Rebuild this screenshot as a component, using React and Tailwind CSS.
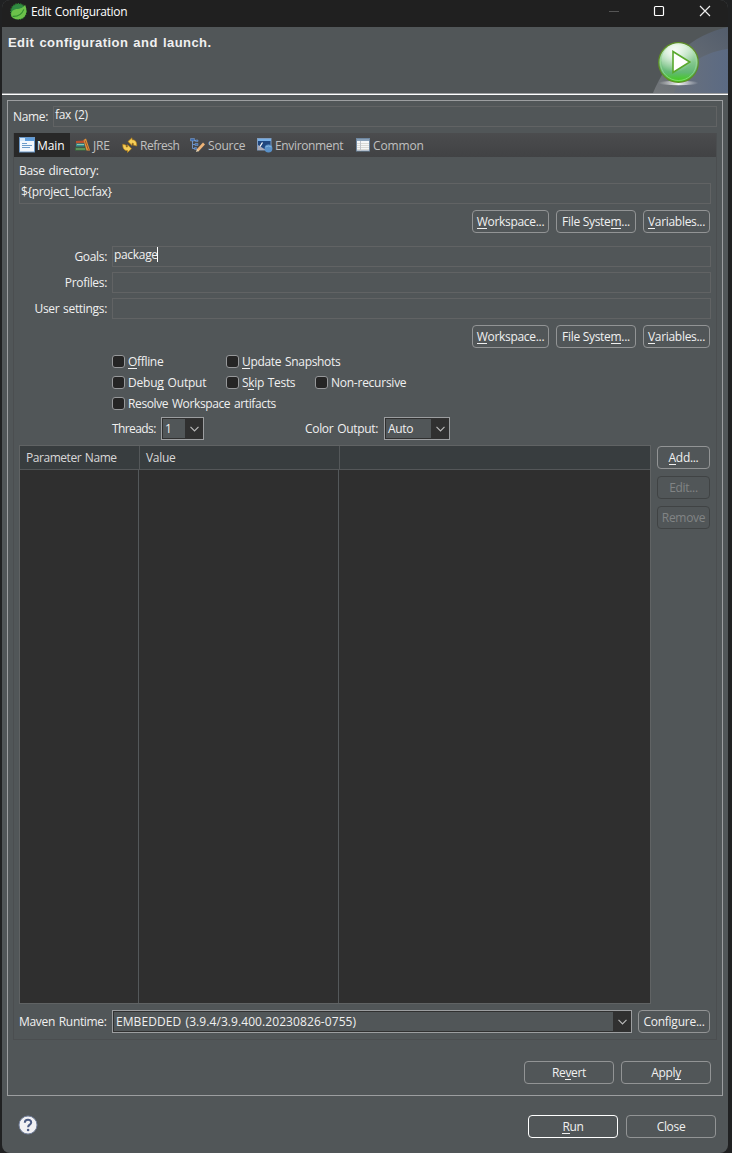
import { useState } from "react";

const SpringIcon = () => (
  <svg width="17" height="17" viewBox="0 0 16 16" className="shrink-0 relative -top-[2px]">
    <circle cx="8" cy="8" r="7.2" fill="#2f8a42" stroke="#2f7f31" strokeWidth="1.4" strokeDasharray="1.2 1" />
    <path d="M14.2 1.6C15.6 5 16 8.800 14.300 11.800C11.800 16 5.500 16.600 1.600 13.200C0 9.500 2 6.400 6 5.700C10 5.200 12.500 4.500 14.200 1.600Z" fill="#6cc04a" />
    <path d="M2.500 12.600C7 12.800 11.300 10.500 13 6" stroke="#2f8d2f" strokeWidth="1" fill="none" />
  </svg>
);

const Banner = () => (
  <svg width="75" height="66" viewBox="0 0 75 66">
    <defs>
      <linearGradient id="arc" x1="0" y1="1" x2="1" y2="0">
        <stop offset="0" stopColor="#73777a" />
        <stop offset="0.5" stopColor="#636a73" />
        <stop offset="1" stopColor="#535d6c" />
      </linearGradient>
      <linearGradient id="arcBlue" x1="0" y1="0" x2="1" y2="0">
        <stop offset="0" stopColor="#6a717c" />
        <stop offset="1" stopColor="#5b6a83" />
      </linearGradient>
      <linearGradient id="ball" x1="0" y1="0" x2="0" y2="1">
        <stop offset="0" stopColor="#d8f0d8" />
        <stop offset="0.5" stopColor="#83c78d" />
        <stop offset="0.75" stopColor="#62b774" />
        <stop offset="1" stopColor="#3fd00c" />
      </linearGradient>
      <radialGradient id="shine" cx="0.38" cy="0.25" r="0.6">
        <stop offset="0" stopColor="#fff" stopOpacity="0.95" />
        <stop offset="1" stopColor="#fff" stopOpacity="0" />
      </radialGradient>
      <linearGradient id="shadow" x1="0" y1="0" x2="1" y2="0">
        <stop offset="0" stopColor="#fff" stopOpacity="0" />
        <stop offset="0.5" stopColor="#fff" stopOpacity="0.9" />
        <stop offset="1" stopColor="#fff" stopOpacity="0" />
      </linearGradient>
    </defs>
    <path d="M0 66C14 32 38 8 75 0V66Z" fill="url(#arc)" />
    <path d="M21 66C30 40 46 26 75 22V66Z" fill="url(#arcBlue)" />
    <ellipse cx="25.500" cy="56" rx="20" ry="2.200" fill="url(#shadow)" />
    <circle cx="25.500" cy="35.500" r="19.800" fill="url(#ball)" stroke="#5f8f28" strokeWidth="1.200" />
    <circle cx="25.500" cy="35.500" r="18" fill="none" stroke="#a5e29c" strokeWidth="1" opacity="0.6" />
    <circle cx="25.500" cy="33.500" r="17" fill="url(#shine)" />
    <path d="M20 24.500V45.500L36.800 35Z" fill="#fff" stroke="#58a82c" strokeWidth="1.600" />
  </svg>
);

const MainIcon = () => (
  <svg width="16" height="16" viewBox="0 0 16 16">
    <rect x="0.500" y="0.500" width="15" height="14.500" fill="#f4f8fd" stroke="#6b98c8" />
    <rect x="1" y="1" width="14" height="3" fill="#5f9edc" />
    <rect x="1" y="1" width="5" height="3" fill="#d5e9fb" />
    <path d="M3 6.500H8M3 8.500H13M3 10.500H11" stroke="#6c9cca" />
  </svg>
);

const JreIcon = () => (
  <svg width="16" height="16" viewBox="0 0 16 16">
    <path d="M1 4L9 3.500V6L1 6.500Z" fill="#b9502f" />
    <path d="M1 6.500H9.500V9.500H1Z" fill="#34908f" />
    <path d="M2 7.500H9" stroke="#8fc8ae" />
    <path d="M0 10.500H11V13.500H0Z" fill="#3b6f42" />
    <path d="M1 12H10" stroke="#82b56c" />
    <path d="M8.500 3L11 1.500L15 13.500H11.500Z" fill="#e5933c" />
    <path d="M10 3.500L13.500 13" stroke="#9e5520" />
  </svg>
);

const RefreshIcon = () => (
  <svg width="16" height="16" viewBox="0 0 16 16" fill="#f6cf58" stroke="#b98317" strokeWidth="0.700">
    <path d="M6 4.500L10 0.800V2.800C13.500 2.500 15 5.500 14.700 9L11.200 8C11.800 6.500 11.500 6 10 6.300V8.500Z" />
    <path d="M9.500 11.700L5.500 15.500V13.500C2 13.800 0.500 11 0.800 7.200L4.300 8.200C3.800 9.700 4 10.400 5.500 10V7.800Z" />
  </svg>
);

const SourceIcon = () => (
  <svg width="16" height="16" viewBox="0 0 16 16" fill="none">
    <path d="M2.500 3V11.500H6M2.500 7.500H6M3 3.500H6" stroke="#6f93c6" />
    <path d="M0.500 1.500H4.500V4H0.500ZM5.500 3H8V4.500H5.500ZM5 6.500H8V8.500H5ZM4.500 10.500H6.500V12.500H4.500Z" fill="#3e6db0" stroke="#87a6d2" strokeWidth="0.500" />
    <path d="M7.500 13.500L14 6.500" stroke="#eeb477" strokeWidth="2.600" />
    <path d="M6 15L7 12L9 14Z" fill="#e9d5b4" />
  </svg>
);

const EnvironmentIcon = () => (
  <svg width="16" height="16" viewBox="0 0 16 16">
    <rect x="0.500" y="1.500" width="13.500" height="11.500" fill="#20477f" stroke="#7f9cc0" />
    <rect x="1" y="2" width="13" height="2" fill="#77afe5" />
    <path d="M1 13V8L9 13Z" fill="#a9a9b6" />
    <path d="M3 9.500L5.500 5.500" stroke="#fff" strokeWidth="1.300" />
    <circle cx="11.500" cy="11.500" r="3.900" fill="#5990c8" />
    <path d="M8.500 10Q11.500 8 14.500 10" stroke="#81b4df" fill="none" />
  </svg>
);

const CommonIcon = () => (
  <svg width="16" height="16" viewBox="0 0 16 16">
    <rect x="1.500" y="1.500" width="13" height="12.500" fill="#f5f6f7" stroke="#6f87a0" />
    <rect x="2" y="2" width="12" height="2" fill="#88a0b8" />
    <path d="M2 6.500H14M2 8.500H14M2 10.500H14M2 12.500H14" stroke="#d9d9d5" />
    <path d="M5.500 4V14" stroke="#c0c4c9" />
  </svg>
);

const Chevron = () => (
  <svg width="9" height="6" viewBox="0 0 9 6" fill="none" stroke="#b9b9b9" strokeWidth="1.200">
    <path d="M0.500 0.800L4.500 4.800L8.500 0.800" />
  </svg>
);

// the character after "&" is underlined as the mnemonic
const Mnemonic = ({ text }) => {
  const i = text.indexOf("&");
  if (i < 0) return text;
  return (
    <>
      {text.slice(0, i)}
      <span className="border-b border-[#f0f0f0] inline-block leading-[13px]">{text[i + 1]}</span>
      {text.slice(i + 2)}
    </>
  );
};

const Button = ({ text, className = "", tone = "border-[#929495] text-[#f0f0f0]" }) => (
  <button className={`h-[23px] shrink-0 rounded-[4px] border whitespace-nowrap flex items-center justify-center pt-px ${tone} ${className}`}>
    <span><Mnemonic text={text} /></span>
  </button>
);

const Field = ({ value = "", caret, className = "" }) => (
  <div className={`h-[21px] border border-[#616364] px-px flex items-start leading-[16px] ${className}`}>
    <span>{value}</span>
    {caret && <span className="w-px h-[15px] -ml-px bg-white" />}
  </div>
);

const Check = ({ text, className = "" }) => {
  const [on, setOn] = useState(false);
  return (
    <div className={`flex items-center h-[21px] whitespace-nowrap ${className}`} onClick={() => setOn(!on)}>
      <span className="size-[13px] rounded-[3px] border border-[#96989a] bg-[#252525] mr-[3px] shrink-0 text-[9px] leading-[11px] text-center">
        {on ? "✓" : ""}
      </span>
      <span><Mnemonic text={text} /></span>
    </div>
  );
};

const Combo = ({ value, className = "" }) => (
  <div className={`h-[23px] border border-[#9c9ea0] bg-[#303030] p-px flex ${className}`}>
    <span className="flex-1 bg-[#515658] pl-0.5 leading-[20px] whitespace-nowrap">{value}</span>
    <span className="w-[17px] flex items-center justify-center pl-[2px]"><Chevron /></span>
  </div>
);

const TABS = [
  { name: "Main", icon: MainIcon, width: "w-[56px]", track: "tracking-[-0.1px]" },
  { name: "JRE", icon: JreIcon, width: "w-[47px]", track: "tracking-[-0.2px]" },
  { name: "Refresh", icon: RefreshIcon, width: "w-[68px]", track: "tracking-[-0.5px]" },
  { name: "Source", icon: SourceIcon, width: "w-[67px]", track: "tracking-[-0.2px]" },
  { name: "Environment", icon: EnvironmentIcon, width: "w-[98px]", track: "tracking-[-0.35px]" },
  { name: "Common", icon: CommonIcon, width: "w-[80px]", track: "tracking-[-0.15px]" },
];

const LocationButtons = () => (
  <div className="flex justify-end mt-[6px] mr-px tracking-[-0.3px]">
    <Button text="&Workspace..." className="w-[77px] mr-[7px]" />
    <Button text="File Syste&m..." className="w-[80px] mr-[7px]" />
    <Button text="&Variables..." className="w-[67px]" />
  </div>
);

export default function App() {
  const [active, setActive] = useState("Main");

  return (
    <div className="h-[1153px] w-[732px] bg-[#202122] pl-[2px] pr-[4px] font-['Open_Sans',sans-serif] text-[12px] leading-[16px] tracking-[-0.32px] [word-spacing:1px] text-[#f0f0f0]">
      <div className="h-full rounded-[8px] bg-[#515658] overflow-hidden">

        {/* Title bar */}
        <div className="h-[27px] bg-[#202020] flex items-center pl-[8px]">
          <SpringIcon />
          <span className="ml-[4px] flex-1 text-white relative -top-[2px]">Edit Configuration</span>
          <svg width="130" height="22" viewBox="0 0 130 22" fill="none" className="self-start">
            <path d="M11 11.500H21" stroke="#555" />
            <rect x="56.500" y="6.500" width="9" height="9" rx="1" stroke="#fff" strokeWidth="1.200" />
            <path d="M102 6L112 16M112 6L102 16" stroke="#eee" strokeWidth="1.200" />
          </svg>
        </div>

        {/* Header */}
        <div className="h-[68px] border-b border-white">
          <div className="h-[67px] border-b border-[#9c9ea0] flex justify-between">
            <h1 className="pl-[6px] pt-[8px] font-['Liberation_Sans',Arial,sans-serif] text-[13px] font-bold tracking-[0.45px]">
              Edit configuration and launch.
            </h1>
            <Banner />
          </div>
        </div>

        {/* Launch configuration */}
        <div className="ml-[5px] mt-[5px] w-[716px] h-[996px] border border-[#9c9ea0] px-[5px] pt-[5px]">
          <div className="flex items-center h-[21px]">
            <span className="w-[40px]">Name:</span>
            <Field value="fax (2)" className="flex-1" />
          </div>

          <div className="mt-[6px] h-[907px] border-x border-b border-[#4b4e50]">
            <div className="h-[24px] bg-linear-to-b from-[#4b4c4e] to-[#414244] flex">
              {TABS.map(({ name, icon: Icon, width, track }) => (
                <button
                  key={name}
                  onClick={() => setActive(name)}
                  className={`flex items-center pl-[5px] gap-[2px] shrink-0 whitespace-nowrap ${width} ${track} ${
                    active === name ? "bg-[#282828] text-white" : "text-[#c0c0c0]"
                  }`}
                >
                  <Icon />
                  <span className="pt-[2px]">{name}</span>
                </button>
              ))}
            </div>

            <div className="pl-[5px] pr-[5px]">
              <div className="pt-[6px] h-[26px]">Base directory:</div>
              <Field value="${project_loc:fax}" />
              <LocationButtons />

              <div className="mt-[13px] grid grid-cols-[88px_1fr] gap-x-[5px] gap-y-[5px] items-center text-right">
                <span>Goals:</span>
                <Field value="package" caret />
                <span>Profiles:</span>
                <Field />
                <span>User settings:</span>
                <Field />
              </div>
              <LocationButtons />

              <div className="ml-[93px] mt-[3px]">
                <div className="flex">
                  <Check text="&Offline" className="w-[114px]" />
                  <Check text="&Update Snapshots" />
                </div>
                <div className="flex">
                  <Check text="Debu&g Output" className="w-[114px] tracking-[-0.2px]" />
                  <Check text="S&kip Tests" className="w-[89px]" />
                  <Check text="Non-recursive" className="tracking-[-0.25px]" />
                </div>
                <Check text="Resolve Workspace artifacts" className="tracking-[-0.38px]" />
                <div className="flex items-center mt-[3px]">
                  <span className="w-[49px] tracking-[-0.6px]">Threads:</span>
                  <Combo value="1" className="w-[43px]" />
                  <span className="ml-[101px] w-[79px] whitespace-nowrap">Color Output:</span>
                  <Combo value="Auto" className="w-[66px]" />
                </div>
              </div>

              {/* Parameters */}
              <div className="mt-[5px] flex">
                <div className="w-[632px] h-[559px] border border-[#606364] bg-[#2f2f2f] flex flex-col">
                  <div className="h-[24px] bg-[#383d3f] border-b border-[#545759] flex leading-[24px] text-[#d8d8d8]">
                    <span className="w-[120px] pl-[6px] border-r border-[#54585a] tracking-[-0.45px]">Parameter Name</span>
                    <span className="w-[200px] pl-[6px] border-r border-[#54585a]">Value</span>
                  </div>
                  <div className="flex flex-1">
                    <div className="w-[119px] border-r border-[#54585a]" />
                    <div className="w-[200px] border-r border-[#54585a]" />
                  </div>
                </div>
                <div className="ml-[6px] pt-px flex flex-col gap-[7px]">
                  <Button text="&Add..." className="w-[53px]" />
                  <Button text="Edit..." className="w-[53px]" tone="border-[#404344] text-[#818485]" />
                  <Button text="Remove" className="w-[53px]" tone="border-[#404344] text-[#818485]" />
                </div>
              </div>

              <div className="mt-[6px] flex items-center">
                <span className="w-[93px] whitespace-nowrap">Maven Runtime:</span>
                <Combo value="EMBEDDED (3.9.4/3.9.400.20230826-0755)" className="w-[520px] tracking-[0.08px]" />
                <Button text="Configure..." className="ml-[6px] w-[72px] tracking-[-0.25px]" />
              </div>
            </div>
          </div>

          <div className="mt-[21px] mr-[6px] flex justify-end gap-[7px]">
            <Button text="Re&vert" className="w-[90px]" />
            <Button text="Appl&y" className="w-[90px]" />
          </div>
        </div>

        {/* Footer */}
        <div className="mt-[19px] flex items-center pl-[16px] pr-[12px]">
          <svg width="20" height="20" viewBox="0 0 20 20" className="mr-auto mb-[3px]">
            <circle cx="10" cy="10" r="9" fill="#f1f1f4" stroke="#76839f" />
            <path d="M6.800 7.700C6.800 3.900 13.200 3.900 13.200 7.400C13.200 9.700 10.100 9.600 10.100 12.200" stroke="#4c5c84" strokeWidth="2" fill="none" />
            <circle cx="10.100" cy="15" r="1.300" fill="#4c5c84" />
          </svg>
          <Button text="&Run" className="w-[90px] mr-[8px]" tone="border-white text-[#f0f0f0]" />
          <Button text="Close" className="w-[90px]" />
        </div>
      </div>
    </div>
  );
}
